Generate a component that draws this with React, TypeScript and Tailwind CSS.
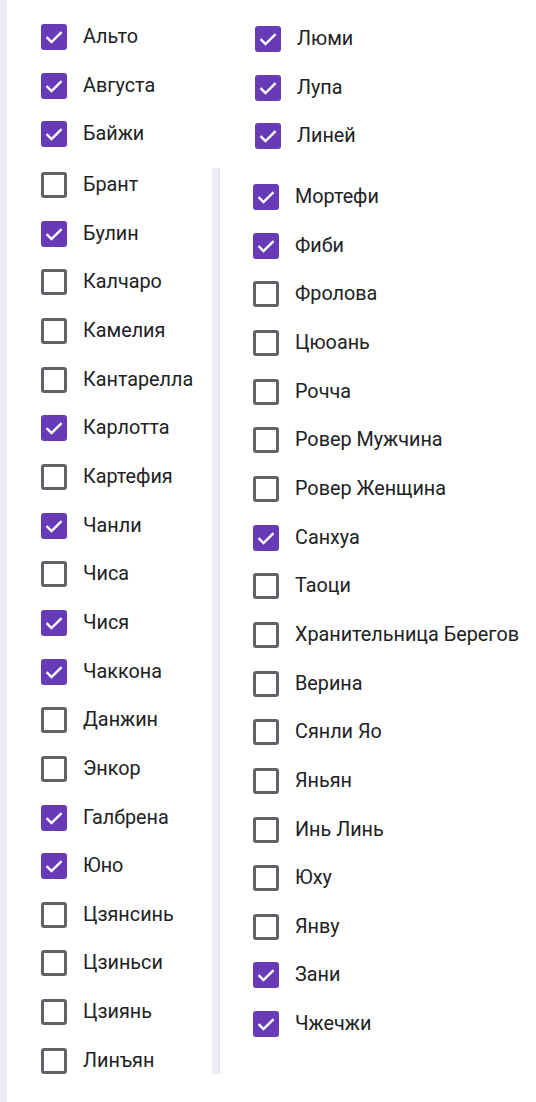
import React from "react";

type Item = { name: string; checked: boolean };

const topLeft: Item[] = [
  { name: "Альто", checked: true },
  { name: "Августа", checked: true },
  { name: "Байжи", checked: true },
];

const topRight: Item[] = [
  { name: "Люми", checked: true },
  { name: "Лупа", checked: true },
  { name: "Линей", checked: true },
];

const left: Item[] = [
  { name: "Брант", checked: false },
  { name: "Булин", checked: true },
  { name: "Калчаро", checked: false },
  { name: "Камелия", checked: false },
  { name: "Кантарелла", checked: false },
  { name: "Карлотта", checked: true },
  { name: "Картефия", checked: false },
  { name: "Чанли", checked: true },
  { name: "Чиса", checked: false },
  { name: "Чися", checked: true },
  { name: "Чаккона", checked: true },
  { name: "Данжин", checked: false },
  { name: "Энкор", checked: false },
  { name: "Галбрена", checked: true },
  { name: "Юно", checked: true },
  { name: "Цзянсинь", checked: false },
  { name: "Цзиньси", checked: false },
  { name: "Цзиянь", checked: false },
  { name: "Линъян", checked: false },
];

const right: Item[] = [
  { name: "Мортефи", checked: true },
  { name: "Фиби", checked: true },
  { name: "Фролова", checked: false },
  { name: "Цюоань", checked: false },
  { name: "Рочча", checked: false },
  { name: "Ровер Мужчина", checked: false },
  { name: "Ровер Женщина", checked: false },
  { name: "Санхуа", checked: true },
  { name: "Таоци", checked: false },
  { name: "Хранительница Берегов", checked: false },
  { name: "Верина", checked: false },
  { name: "Сянли Яо", checked: false },
  { name: "Яньян", checked: false },
  { name: "Инь Линь", checked: false },
  { name: "Юху", checked: false },
  { name: "Янву", checked: false },
  { name: "Зани", checked: true },
  { name: "Чжечжи", checked: true },
];

function Box({ checked }: { checked: boolean }) {
  if (checked) {
    return (
      <span className="flex h-[26px] w-[26px] shrink-0 items-center justify-center rounded-[3px] bg-[#673ab7]">
        <svg width="26" height="26" viewBox="0 0 26 26">
          <polyline
            points="5.6,13.2 10.5,18 20.6,8.2"
            fill="none"
            stroke="#fff"
            strokeWidth="2.4"
          />
        </svg>
      </span>
    );
  }
  return (
    <span className="block h-[26px] w-[26px] shrink-0 rounded-[3px] border-[3px] border-[#5f6368]" />
  );
}

function List({ items }: { items: Item[] }) {
  return (
    <div className="flex flex-col gap-[22.67px]">
      {items.map((it) => (
        <label key={it.name} className="flex h-[26px] items-center gap-[16px]">
          <Box checked={it.checked} />
          <span className="whitespace-nowrap leading-[26px]">{it.name}</span>
        </label>
      ))}
    </div>
  );
}

export default function App() {
  return (
    <div className="min-h-[1102px] border-l-[7px] border-[#ecebf7] bg-white font-['Roboto',sans-serif] text-[19.8px] text-[#202124]">
      <div className="flex pt-[24px]">
        <div className="w-[205px] pl-[34px]">
          <List items={topLeft} />
        </div>
        <div className="pl-[43px] pt-[2px]">
          <List items={topRight} />
        </div>
      </div>

      <div className="mt-[18.67px] flex">
        <div className="w-[205px] pl-[34px] pt-[4px]">
          <List items={left} />
        </div>
        <div className="border-l-[7px] border-[#ecebf7] pl-[34px] pt-[16px] shadow-[inset_1px_0_0_#e2def0]">
          <List items={right} />
        </div>
      </div>
    </div>
  );
}
